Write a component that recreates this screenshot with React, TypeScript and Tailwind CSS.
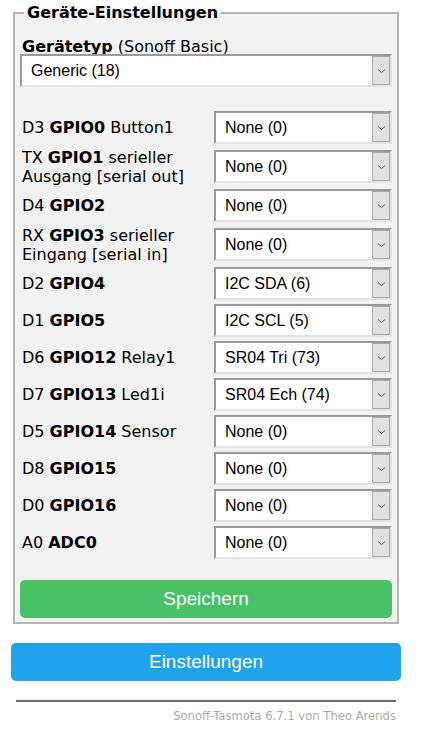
import React from "react";

const rows: { pin: string; gpio: string; name?: string; wrap?: string; value: string }[] = [
  { pin: "D3", gpio: "GPIO0", name: "Button1", value: "None (0)" },
  { pin: "TX", gpio: "GPIO1", name: "serieller", wrap: "Ausgang [serial out]", value: "None (0)" },
  { pin: "D4", gpio: "GPIO2", value: "None (0)" },
  { pin: "RX", gpio: "GPIO3", name: "serieller", wrap: "Eingang [serial in]", value: "None (0)" },
  { pin: "D2", gpio: "GPIO4", value: "I2C SDA (6)" },
  { pin: "D1", gpio: "GPIO5", value: "I2C SCL (5)" },
  { pin: "D6", gpio: "GPIO12", name: "Relay1", value: "SR04 Tri (73)" },
  { pin: "D7", gpio: "GPIO13", name: "Led1i", value: "SR04 Ech (74)" },
  { pin: "D5", gpio: "GPIO14", name: "Sensor", value: "None (0)" },
  { pin: "D8", gpio: "GPIO15", value: "None (0)" },
  { pin: "D0", gpio: "GPIO16", value: "None (0)" },
  { pin: "A0", gpio: "ADC0", value: "None (0)" },
];

function Select({ value }: { value: string }) {
  return (
    <div className="relative h-[33px] w-full border-t-2 border-l-2 border-b-2 border-r-2 border-t-[#9a9a9a] border-l-[#9a9a9a] border-b-[#e3e3e3] border-r-[#e3e3e3] bg-white">
      <div className="flex h-full items-center pl-[9px] font-['Liberation_Sans',Arial,sans-serif] text-[16px] text-black">
        {value}
      </div>
      {/* dropdown button */}
      <div className="absolute top-0 right-0 bottom-0 flex w-[18px] items-center justify-center border border-[#a8a8a8] bg-[#e1e1e1]">
        <svg width="9" height="6" viewBox="0 0 9 6" fill="none">
          <path d="M1 1.5 L4.5 4.5 L8 1.5" stroke="#606060" strokeWidth="1" />
        </svg>
      </div>
    </div>
  );
}

export default function App() {
  return (
    <div className="min-h-[735px] bg-white font-['DejaVu_Sans',Verdana,sans-serif] text-black">
      <div className="ml-[11px] w-[390px] pt-[3px]">
        <fieldset className="mx-[2px] border-2 border-[#b4b4b4] bg-[#f2f2f2] px-[5px] pb-[4px]">
          <legend className="ml-[4px] px-[3px] text-[16px] font-bold leading-[20px]">
            Geräte-Einstellungen
          </legend>

          {/* Module type */}
          <p className="mt-[14px] pl-[2px] text-[16px] leading-[19px]">
            <b>Gerätetyp</b> (Sonoff Basic)
          </p>
          <div className="-mt-[2px] h-[34px]">
            <Select value="Generic (18)" />
          </div>

          {/* GPIO table */}
          <div className="mt-[21px] flex flex-col">
            {rows.map((r) => (
              <div
                key={r.gpio}
                className={r.wrap ? "flex h-[41px] items-center" : "flex h-[37px] items-center"}
              >
                <div className="w-[194px] shrink-0 pl-[2px] text-[16px] leading-[19px]">
                  {r.pin} <b>{r.gpio}</b>
                  {r.name ? ` ${r.name}` : ""}
                  {r.wrap && (
                    <>
                      <br />
                      {r.wrap}
                    </>
                  )}
                </div>
                <div className="flex-1">
                  <Select value={r.value} />
                </div>
              </div>
            ))}
          </div>

          <button className="mt-[19px] h-[38px] w-full rounded-[5px] bg-[#47c266] font-['Liberation_Sans',Arial,sans-serif] text-[19px] text-white">
            Speichern
          </button>
        </fieldset>

        <button className="mt-[19px] h-[38px] w-full rounded-[5px] bg-[#1fa3ec] font-['Liberation_Sans',Arial,sans-serif] text-[19px] text-white">
          Einstellungen
        </button>

        <div className="mx-[5px] mt-[19px] text-right">
          <div className="h-[2px] bg-[#6e6e6e]" />
          <div className="mt-[6px] text-[11.6px] text-[#aaaaaa]">
            Sonoff-Tasmota 6.7.1 von Theo Arends
          </div>
        </div>
      </div>
    </div>
  );
}
